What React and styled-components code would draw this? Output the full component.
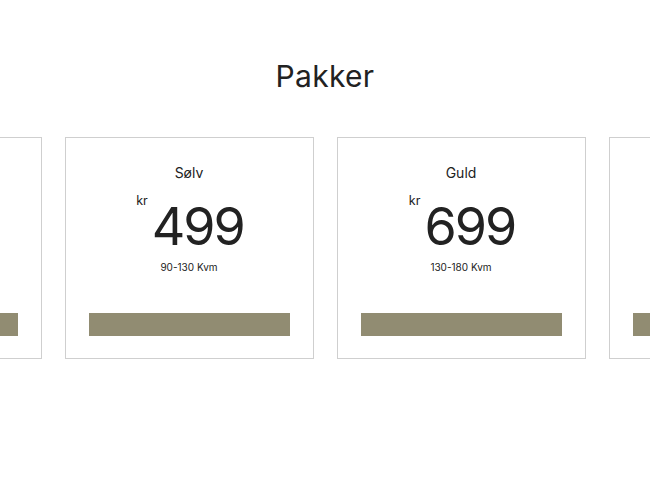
import React from 'react'
import styled, { createGlobalStyle } from 'styled-components'

const GlobalStyle = createGlobalStyle`
  body {
    margin: 0;
    background: #fff;
    font-family: 'Inter', 'Noto Sans', sans-serif;
    color: #222;
  }
`

const Page = styled.div`
  width: 650px;
  height: 500px;
  overflow: hidden;
`

const Title = styled.h1`
  margin: 0;
  padding-top: 56px;
  text-align: center;
  font-size: 30px;
  font-weight: 400;
  line-height: 40px;
  letter-spacing: 0.3px;
`

const Row = styled.div`
  display: flex;
  justify-content: center;
  gap: 23px;
  margin-top: 41px;
`

const Card = styled.div`
  flex: 0 0 249px;
  height: 222px;
  box-sizing: border-box;
  border: 1px solid #cfcfcf;
  padding: 26px 23px 22px 23px;
  display: flex;
  flex-direction: column;
  align-items: center;
`

const Name = styled.div`
  font-size: 14px;
  line-height: 18px;
`

const Price = styled.div`
  display: flex;
  align-items: flex-start;
  margin-top: 11px;
  height: 64px;
`

const Currency = styled.span`
  font-size: 12.5px;
  line-height: 16px;
  margin-right: 4px;
`

const Amount = styled.span`
  font-size: 52px;
  line-height: 56px;
  margin-top: 6px;
  letter-spacing: -2px;
  margin-right: -2px;
`

const Size = styled.div`
  margin-top: 3px;
  font-size: 10px;
  line-height: 14px;
`

const Bar = styled.div`
  margin-top: auto;
  width: 100%;
  height: 23px;
  background: #918c72;
`

const packages = [
  { name: 'Bronze', price: '299', size: '50-90 Kvm' },
  { name: 'Sølv', price: '499', size: '90-130 Kvm' },
  { name: 'Guld', price: '699', size: '130-180 Kvm' },
  { name: 'Platin', price: '899', size: '180+ Kvm' },
]

export default function App() {
  return (
    <Page>
      <GlobalStyle />
      <Title>Pakker</Title>
      <Row>
        {packages.map((p, i) => (
          <Card key={p.name}>
            {i === 1 || i === 2 ? (
              <>
                <Name>{p.name}</Name>
                <Price>
                  <Currency>kr</Currency>
                  <Amount>{p.price}</Amount>
                </Price>
                <Size>{p.size}</Size>
              </>
            ) : null}
            <Bar />
          </Card>
        ))}
      </Row>
    </Page>
  )
}
